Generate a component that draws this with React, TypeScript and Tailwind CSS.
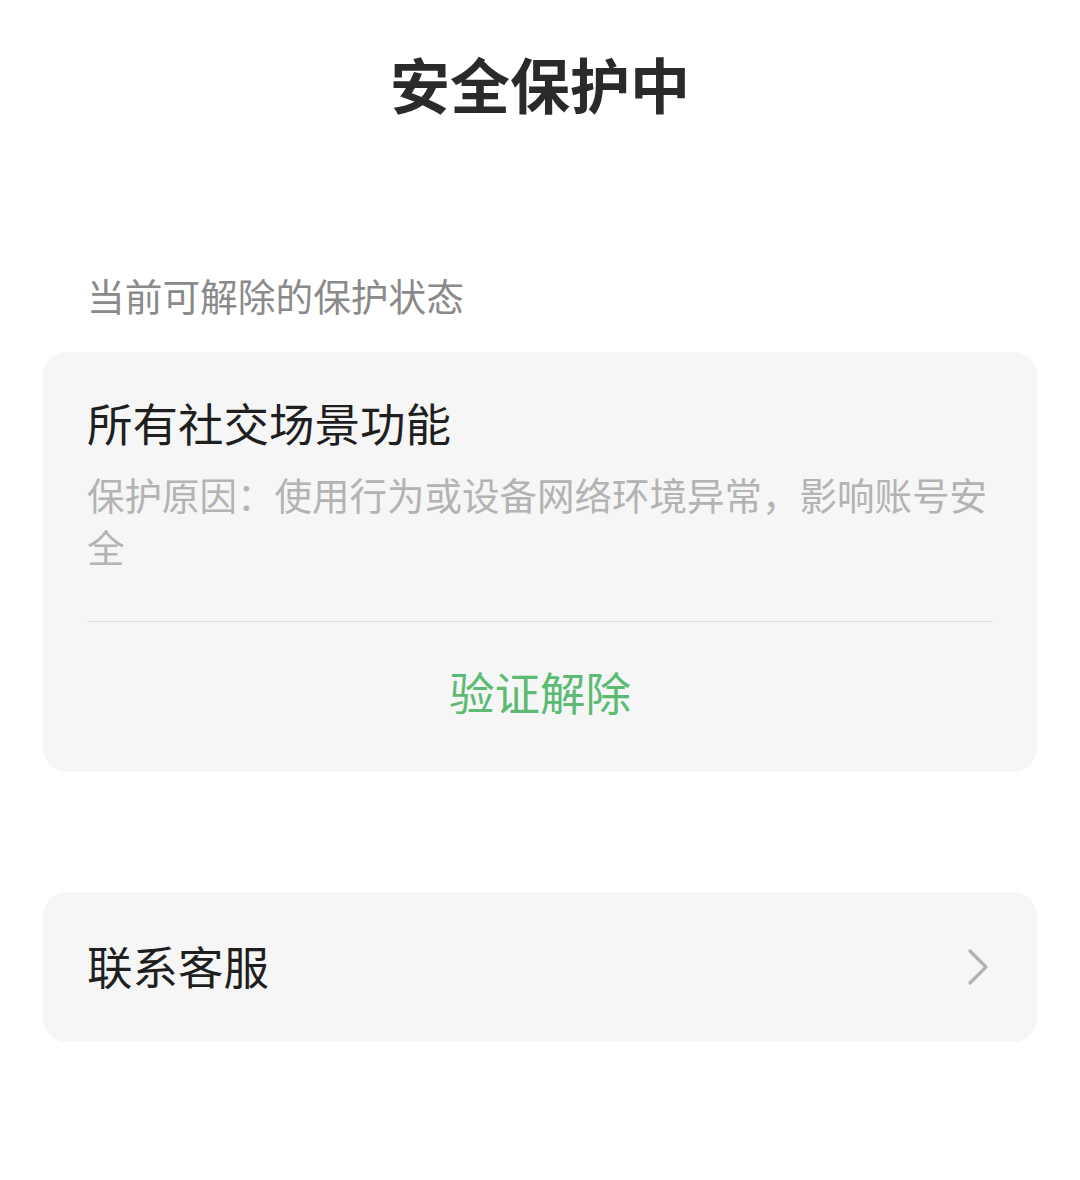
import React from 'react'

const ChevronRight: React.FC = () => (
    <svg width="22" height="36" viewBox="0 0 22 36" fill="none">
        <path
            d="M3 2 L19 18 L3 34"
            stroke="#b2b2b2"
            strokeWidth="3.2"
            strokeLinecap="round"
            strokeLinejoin="round"
        />
    </svg>
)

export default function App() {
    return (
        <div className="min-h-[1180px] bg-white font-['Noto_Sans_CJK_SC','Noto_Sans',sans-serif]">
            {/* Page title */}
            <h1 className="pt-[48px] text-center text-[60px] leading-[70px] font-bold text-[#2a2a2a]">
                安全保护中
            </h1>

            {/* Section label */}
            <p className="mt-[155px] px-[87px] text-[37.7px] leading-[44px] text-[#8a8a8a]">
                当前可解除的保护状态
            </p>

            {/* Protection status card */}
            <div className="mt-[35px] mx-[43px] rounded-[24px] bg-[#f6f6f6] px-[44px]">
                <h2 className="pt-[42px] text-[45.5px] leading-[56px] text-[#1f1f1f]">
                    所有社交场景功能
                </h2>
                <p className="mt-[18px] text-[37.5px] leading-[52px] text-[#b3b3b3]">
                    保护原因：使用行为或设备网络环境异常，影响账号安全
                </p>
                <div className="mt-[49px] h-px bg-[#dddddd]" />
                <button className="block w-full pt-[42px] pb-[54px] text-center text-[45.5px] leading-[54px] text-[#5cbb72]">
                    验证解除
                </button>
            </div>

            {/* Contact support row */}
            <div className="mt-[120px] mx-[43px] h-[150px] rounded-[24px] bg-[#f6f6f6] pl-[44px] pr-[48px] pb-[5px] flex items-center justify-between">
                <span className="text-[45.5px] leading-[54px] text-[#1f1f1f]">
                    联系客服
                </span>
                <span className="mt-[5px]">
                    <ChevronRight />
                </span>
            </div>
        </div>
    )
}
